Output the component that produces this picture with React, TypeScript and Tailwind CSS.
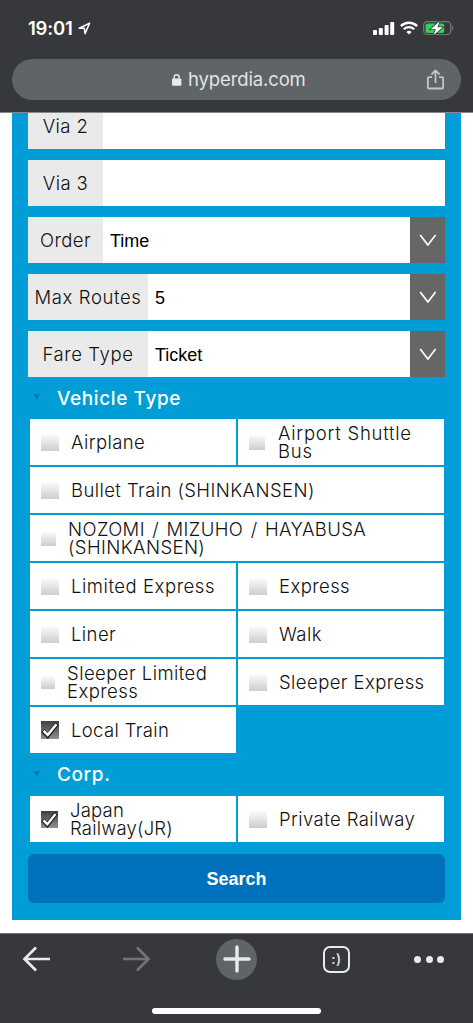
import clsx from "clsx";

type Option = {
  label: string;
  checked?: boolean;
  wide?: boolean;
  box?: string;
  text?: string;
};

const vehicles: Option[] = [
  { label: "Airplane" },
  { label: "Airport Shuttle\nBus", box: "size-4", text: "ml-[13px] tracking-[0.75px]" },
  { label: "Bullet Train (SHINKANSEN)", wide: true },
  {
    label: "NOZOMI / MIZUHO / HAYABUSA\n(SHINKANSEN)",
    wide: true,
    box: "size-[15px]",
    text: "ml-[12px] tracking-[0.4px] [word-spacing:1.8px]",
  },
  { label: "Limited Express", text: "ml-[12px] tracking-[0.55px]" },
  { label: "Express" },
  { label: "Liner" },
  { label: "Walk" },
  { label: "Sleeper Limited\nExpress", box: "size-[14px]", text: "ml-[12px] tracking-[0.45px]" },
  { label: "Sleeper Express" },
  { label: "Local Train", checked: true, text: "ml-[12px] tracking-[0.35px]" },
];

const corps: Option[] = [
  { label: "Japan\nRailway(JR)", checked: true, box: "size-[17px]", text: "ml-[12px] tracking-[0.2px]" },
  { label: "Private Railway" },
];

function StatusBar() {
  return (
    <div className="flex h-[59px] items-start justify-between pl-[28px] pr-[19px]">
      <div className="mt-[17px] flex items-center">
        <span className="w-[50px] whitespace-nowrap font-['Inter'] text-[18.5px] font-semibold leading-[23px] tracking-[-0.2px] text-white">
          19:01
        </span>
        <svg className="size-[13px]" viewBox="0 0 13 13" fill="none" stroke="#fff" strokeWidth="1.5" strokeLinejoin="round">
          <path d="M1.2 6.2 11.6 1.3 7 11.6 6.3 6.3Z" />
        </svg>
      </div>
      <div className="mt-[20px] flex items-center">
        <svg className="h-[16px] w-[22px]" viewBox="0 0 22 16" fill="#fff">
          <rect x="0" y="10" width="4" height="5" rx="1" />
          <rect x="5.8" y="8" width="4" height="7" rx="1" />
          <rect x="11.6" y="5" width="4" height="10" rx="1" />
          <rect x="17.2" y="2" width="4" height="13" rx="1" />
        </svg>
        <svg className="ml-[5px] h-[16px] w-[18px]" viewBox="0 0 18 16" fill="none" stroke="#fff">
          <path d="M.9 6.1a11.6 11.6 0 0 1 16.2 0" strokeWidth="2.5" />
          <path d="M3.8 9.2a7.4 7.4 0 0 1 10.4 0" strokeWidth="2.3" />
          <path d="M9 14.6 6.4 12a3.7 3.7 0 0 1 5.2 0Z" fill="#fff" stroke="none" />
        </svg>
        <svg className="ml-[5px] h-[16px] w-[31px]" viewBox="0 0 31 16">
          <rect x=".7" y="1.7" width="27" height="12.8" rx="3.6" fill="none" stroke="#77787b" strokeWidth="1.2" />
          <path d="M29 6v4.4c1.8-.6 1.8-3.8 0-4.4Z" fill="#77787b" />
          <rect x="2.6" y="3.4" width="18.6" height="9.6" rx="1.8" fill="#30d158" />
          <path
            d="M16.6 1.2 7.6 9.3h5.2l-2.3 6 9.3-8.1h-5.2Z"
            fill="#fff"
            stroke="#37383b"
            strokeWidth="1.6"
            className="[paint-order:stroke]"
          />
        </svg>
      </div>
    </div>
  );
}

function AddressBar() {
  return (
    <div className="mx-[12px] flex h-[41px] items-center rounded-full bg-[#5f6467] pl-[160px] pr-[17px]">
      <svg className="h-[12px] w-[10px]" viewBox="0 0 10 12">
        <rect x="0" y="4.4" width="9.4" height="7.4" rx="1.2" fill="#e8eaed" />
        <path d="M2.2 5V3.2a2.5 2.5 0 0 1 5 0V5" fill="none" stroke="#e8eaed" strokeWidth="1.4" />
      </svg>
      <span className="mb-[2px] ml-[6px] font-['Inter'] text-[18.5px] leading-6 tracking-[-0.13px] text-[#e1e3e5]">
        hyperdia.com
      </span>
      <svg className="mb-px ml-auto h-[21px] w-[17px]" viewBox="0 0 17 21" fill="none" stroke="#c2c5c7" strokeWidth="1.8" strokeLinejoin="round">
        <path d="M5 8.2H1.8c-.6 0-.9.3-.9.9v9.4c0 .7.3 1 .9 1h13.4c.6 0 .9-.3.9-1V9.1c0-.6-.3-.9-.9-.9H12M8.5 14V1.4M4.4 5.5l4.1-4.1 4.1 4.1" />
      </svg>
    </div>
  );
}

function Field({ label, value, wide }: { label: string; value?: string; wide?: boolean }) {
  return (
    <div className="flex h-[46px] bg-white">
      <div
        className={clsx(
          "flex shrink-0 items-center justify-center whitespace-nowrap bg-[#eaeaea] pt-[2px] font-['Inter'] text-[18.5px] font-light text-[#111]",
          wide ? "w-[120px] tracking-[0.6px]" : "w-[75px] tracking-[0.4px]",
        )}
      >
        {label}
      </div>
      {value && (
        <>
          <div className="flex flex-1 items-center pl-[7px] pt-[2px] font-['Liberation_Sans'] text-[18px] text-black">
            {value}
          </div>
          <div className="flex w-[35px] items-center justify-center bg-[#666]">
            <svg className="h-[12px] w-[17px]" viewBox="0 0 17 12" fill="none" stroke="#fff" strokeWidth="1.7">
              <path d="M1.2 1 8.9 11 16.6 1" />
            </svg>
          </div>
        </>
      )}
    </div>
  );
}

function Heading({ title }: { title: string }) {
  return (
    <h2 className="flex items-center pl-[5px] pt-[2px] font-['Inter'] text-[19px] font-medium tracking-[0.6px] text-white">
      <svg className="mb-[4px] mr-[16px] h-[6px] w-[8px]" viewBox="0 0 8 6" fill="#0872bb">
        <path d="M.5.3h6.6L3.8 5.7Z" />
      </svg>
      {title}
    </h2>
  );
}

function Box({ checked, size = "size-[18px]" }: { checked?: boolean; size?: string }) {
  if (!checked) {
    return <span className={clsx("shrink-0 bg-linear-to-b from-white to-[#cdcdcd]", size)} />;
  }
  return (
    <span className={clsx("shrink-0 bg-linear-to-b from-[#404040] to-[#919191]", size)}>
      <svg className="size-full" viewBox="0 0 18 18" fill="none">
        <path d="M1.8 9.6 6.7 14.6 16 2.6" stroke="#222" strokeWidth="4.6" />
        <path d="M2.6 9.9 6.7 13.9 15.4 3.2" stroke="#fff" strokeWidth="2.5" />
      </svg>
    </span>
  );
}

function OptionGrid({ options }: { options: Option[] }) {
  return (
    <div className="ml-[2px] grid w-[414px] grid-cols-2 gap-[2px]">
      {options.map((o) => (
        <label key={o.label} className={clsx("flex h-[46px] items-center bg-white pl-[11px]", o.wide && "col-span-2")}>
          <Box checked={o.checked} size={o.box} />
          <span
            className={clsx(
              "whitespace-pre font-['Inter'] text-[18.5px] font-light leading-[18px] text-[#111]",
              o.text ?? "ml-[12px] tracking-[0.42px]",
            )}
          >
            {o.label}
          </span>
        </label>
      ))}
    </div>
  );
}

function Toolbar() {
  return (
    <footer className="flex h-[90px] flex-col items-center border-t border-[#727376] bg-[#37383b]">
      <div className="mt-[4px] flex h-[42px] w-full items-center pl-[22px] pr-[29px]">
        <svg className="h-[26px] w-[29px]" viewBox="0 0 29 26" fill="none" stroke="#e8eaed" strokeWidth="2.7">
          <path d="M28 13H3M14 1.5 2.5 13 14 24.5" />
        </svg>
        <svg className="ml-[71px] h-[26px] w-[29px]" viewBox="0 0 29 26" fill="none" stroke="#737477" strokeWidth="2.7">
          <path d="M1 13h25M15 1.5 26.5 13 15 24.5" />
        </svg>
        <div className="ml-[65px] flex size-[41px] items-center justify-center rounded-full bg-[#5f6467]">
          <svg className="size-[28px]" viewBox="0 0 28 28" stroke="#e8eaed" strokeWidth="3.4" strokeLinecap="round">
            <path d="M14 2v24M2 14h24" />
          </svg>
        </div>
        <div className="ml-[66px] flex size-[27px] items-center justify-center rounded-[7px] border-2 border-[#e8eaed] pb-[2px] font-['Inter'] text-[14px] font-medium tracking-[0.5px] text-[#e8eaed]">
          :)
        </div>
        <div className="ml-auto flex gap-[4.5px]">
          <span className="size-[7px] rounded-full bg-[#e8eaed]" />
          <span className="size-[7px] rounded-full bg-[#e8eaed]" />
          <span className="size-[7px] rounded-full bg-[#e8eaed]" />
        </div>
      </div>
      <div className="mt-[28px] h-[6px] w-[169px] rounded-full bg-white" />
    </footer>
  );
}

export default function App() {
  return (
    <div className="flex h-[1023px] w-[473px] flex-col overflow-hidden bg-white">
      <header className="h-[113px] shrink-0 border-b border-[#87888a] bg-[#37383b]">
        <StatusBar />
        <AddressBar />
      </header>

      <main className="mx-[12px] flex h-[807px] shrink-0 flex-col overflow-hidden bg-[#009dd7] px-4">
        <div className="-mt-[10px] flex w-[417px] flex-col gap-[11px]">
          <Field label="Via 2" />
          <Field label="Via 3" />
          <Field label="Order" value="Time" />
          <Field label="Max Routes" value="5" wide />
          <Field label="Fare Type" value="Ticket" wide />
        </div>
        <div className="grid h-[42px] items-center">
          <Heading title="Vehicle Type" />
        </div>
        <OptionGrid options={vehicles} />
        <div className="grid h-[43px] items-center">
          <Heading title="Corp." />
        </div>
        <OptionGrid options={corps} />
        <button className="mt-[12px] h-[49px] w-[417px] rounded-[6px] bg-[#0071bc] pt-[2px] font-['Liberation_Sans'] text-[18px] font-bold text-white">
          Search
        </button>
      </main>

      <div className="flex-1" />
      <Toolbar />
    </div>
  );
}
